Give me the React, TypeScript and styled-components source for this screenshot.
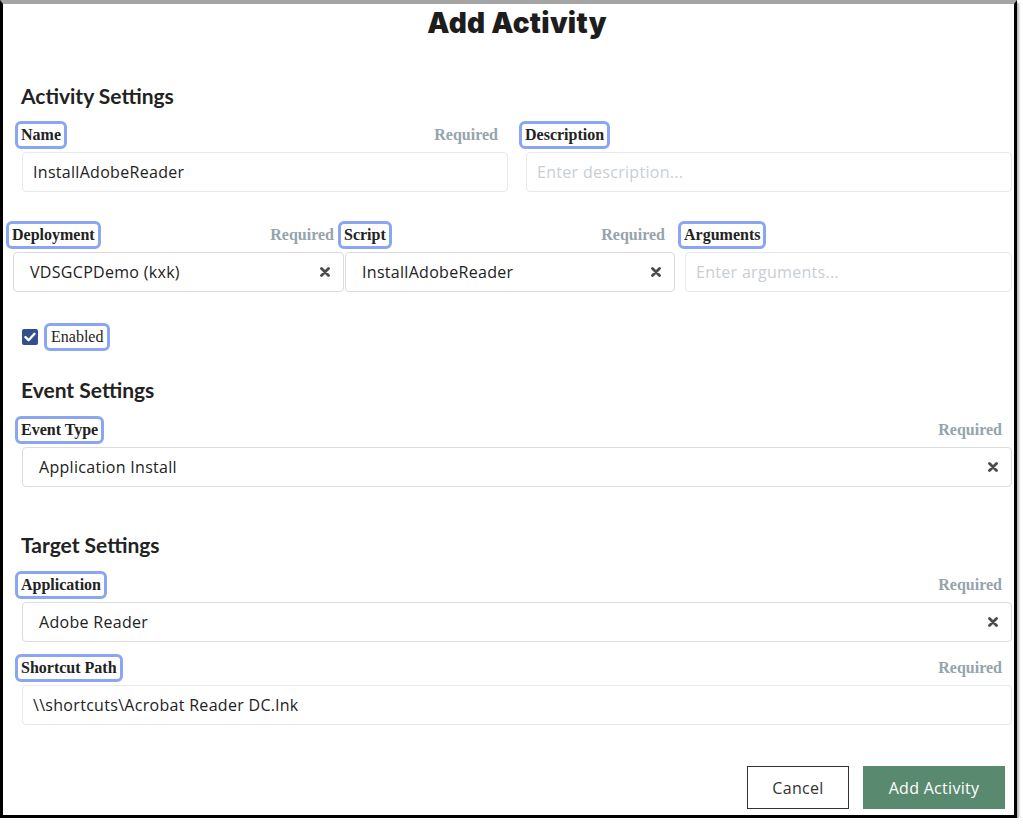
import styled, { createGlobalStyle } from "styled-components";

const GlobalStyle = createGlobalStyle`
  html, body {
    margin: 0;
    padding: 0;
    background: #ffffff;
  }
  * {
    box-sizing: border-box;
  }
`;

const Frame = styled.div`
  width: 1017px;
  height: 818px;
  border-top: 4px solid #a4a4a4;
  border-left: 3px solid #000;
  border-right: 3px solid #000;
  border-bottom: 3px solid #000;
  box-shadow: 2px 3px 2px rgba(0, 0, 0, 0.3);
  background: #fff;
  padding: 0 2px 0 19px;
  display: flex;
  flex-direction: column;
`;

const Title = styled.h1`
  margin: 0;
  height: 39px;
  line-height: 38px;
  text-align: center;
  font-family: Inter, "Noto Sans", sans-serif;
  font-weight: 900;
  font-size: 28px;
  letter-spacing: 0.3px;
  color: #1d1d1d;
`;

const SectionTitle = styled.h2<{ $top: number }>`
  margin: ${(p) => p.$top}px 0 0 -1px;
  height: 24px;
  line-height: 24px;
  font-family: Lato, "Noto Sans", sans-serif;
  font-weight: 700;
  font-size: 21px;
  color: #222;
`;

const Row = styled.div<{ $top: number; $cols: string; $shift?: number }>`
  display: grid;
  grid-template-columns: ${(p) => p.$cols};
  margin-top: ${(p) => p.$top}px;
  margin-left: ${(p) => -(p.$shift || 0)}px;
`;

const Field = styled.div<{ $gapLeft?: number }>`
  display: flex;
  flex-direction: column;
  min-width: 0;
  margin-left: ${(p) => p.$gapLeft || 0}px;
`;

const LabelRow = styled.div`
  display: flex;
  align-items: center;
  justify-content: space-between;
  height: 22px;
  margin-bottom: 6px;
`;

const Label = styled.label`
  display: inline-block;
  height: 22px;
  line-height: 22px;
  margin-left: -4px;
  padding: 0 3px;
  font-family: "Liberation Serif", "Times New Roman", serif;
  font-weight: 700;
  font-size: 16px;
  color: #222;
  border-radius: 3px;
  outline: 3px solid #8aa6f2;
`;

const Required = styled.span`
  padding-right: 10px;
  font-family: "Liberation Serif", "Times New Roman", serif;
  font-weight: 700;
  font-size: 16px;
  color: #95a4ad;
`;

const TextBox = styled.div<{ $empty?: boolean }>`
  height: 40px;
  display: flex;
  align-items: center;
  padding: 0 10px;
  border: 1px solid #e6e9ed;
  border-radius: 4px;
  font-family: "Open Sans", sans-serif;
  font-size: 16px;
  letter-spacing: 0.3px;
  color: ${(p) => (p.$empty ? "#c9ced4" : "#222")};
`;

const SelectBox = styled.div`
  height: 40px;
  display: flex;
  align-items: center;
  justify-content: space-between;
  padding: 0 13px 0 16px;
  border: 1px solid #dcdcdc;
  border-radius: 4px;
  font-family: "Open Sans", sans-serif;
  font-size: 16px;
  letter-spacing: 0.3px;
  color: #222;
`;

const CheckRow = styled.div`
  display: flex;
  align-items: center;
  gap: 9px;
  margin-top: 34px;
  height: 22px;
`;

const CheckBox = styled.span`
  width: 16px;
  height: 16px;
  border-radius: 2px;
  background: #32508d;
  display: flex;
  align-items: center;
  justify-content: center;
`;

const CheckLabel = styled(Label)`
  margin-left: 0;
  padding: 0 4px;
  font-weight: 400;
`;

const Footer = styled.div`
  display: flex;
  justify-content: flex-end;
  gap: 14px;
  margin-top: 41px;
  margin-right: 7px;
`;

const Button = styled.button<{ $primary?: boolean }>`
  height: 43px;
  padding: 0 24px;
  font-family: "Open Sans", sans-serif;
  font-size: 16px;
  letter-spacing: 0.3px;
  border-radius: 0;
  background: ${(p) => (p.$primary ? "#598a70" : "#fff")};
  color: ${(p) => (p.$primary ? "#fff" : "#333")};
  border: ${(p) => (p.$primary ? "none" : "1px solid #333")};
  min-width: ${(p) => (p.$primary ? 142 : 102)}px;
`;

function ClearIcon() {
  return (
    <svg width="10" height="10" viewBox="0 0 10 10">
      <path d="M1.5 1.5 L8.5 8.5 M8.5 1.5 L1.5 8.5" stroke="#4a4a4a" strokeWidth="2.8" strokeLinecap="round" />
    </svg>
  );
}

function Check() {
  return (
    <svg width="12" height="10" viewBox="0 0 12 10">
      <path d="M1.5 5.2 L4.6 8.2 L10.5 1.8" stroke="#fff" strokeWidth="2.4" fill="none" strokeLinecap="round" strokeLinejoin="round" />
    </svg>
  );
}

function FieldHead({ label, required }: { label: string; required?: boolean }) {
  return (
    <LabelRow>
      <Label>{label}</Label>
      {required && <Required>Required</Required>}
    </LabelRow>
  );
}

function Select({ value }: { value: string }) {
  return (
    <SelectBox>
      <span>{value}</span>
      <ClearIcon />
    </SelectBox>
  );
}

export default function App() {
  return (
    <>
      <GlobalStyle />
      <Frame>
        <Title>Add Activity</Title>

        <SectionTitle $top={41}>Activity Settings</SectionTitle>
        <Row $top={16} $cols="486px 1fr">
          <Field>
            <FieldHead label="Name" required />
            <TextBox>InstallAdobeReader</TextBox>
          </Field>
          <Field $gapLeft={18}>
            <FieldHead label="Description" />
            <TextBox $empty>Enter description...</TextBox>
          </Field>
        </Row>

        <Row $top={32} $cols="331px 331px 1fr" $shift={9}>
          <Field>
            <FieldHead label="Deployment" required />
            <Select value="VDSGCPDemo (kxk)" />
          </Field>
          <Field $gapLeft={1}>
            <FieldHead label="Script" required />
            <Select value="InstallAdobeReader" />
          </Field>
          <Field $gapLeft={10}>
            <FieldHead label="Arguments" />
            <TextBox $empty>Enter arguments...</TextBox>
          </Field>
        </Row>

        <CheckRow>
          <CheckBox>
            <Check />
          </CheckBox>
          <CheckLabel>Enabled</CheckLabel>
        </CheckRow>

        <SectionTitle $top={30}>Event Settings</SectionTitle>
        <Row $top={17} $cols="1fr">
          <Field>
            <FieldHead label="Event Type" required />
            <Select value="Application Install" />
          </Field>
        </Row>

        <SectionTitle $top={46}>Target Settings</SectionTitle>
        <Row $top={17} $cols="1fr">
          <Field>
            <FieldHead label="Application" required />
            <Select value="Adobe Reader" />
          </Field>
        </Row>
        <Row $top={15} $cols="1fr">
          <Field>
            <FieldHead label="Shortcut Path" required />
            <TextBox>\\shortcuts\Acrobat Reader DC.lnk</TextBox>
          </Field>
        </Row>

        <Footer>
          <Button>Cancel</Button>
          <Button $primary>Add Activity</Button>
        </Footer>
      </Frame>
    </>
  );
}
